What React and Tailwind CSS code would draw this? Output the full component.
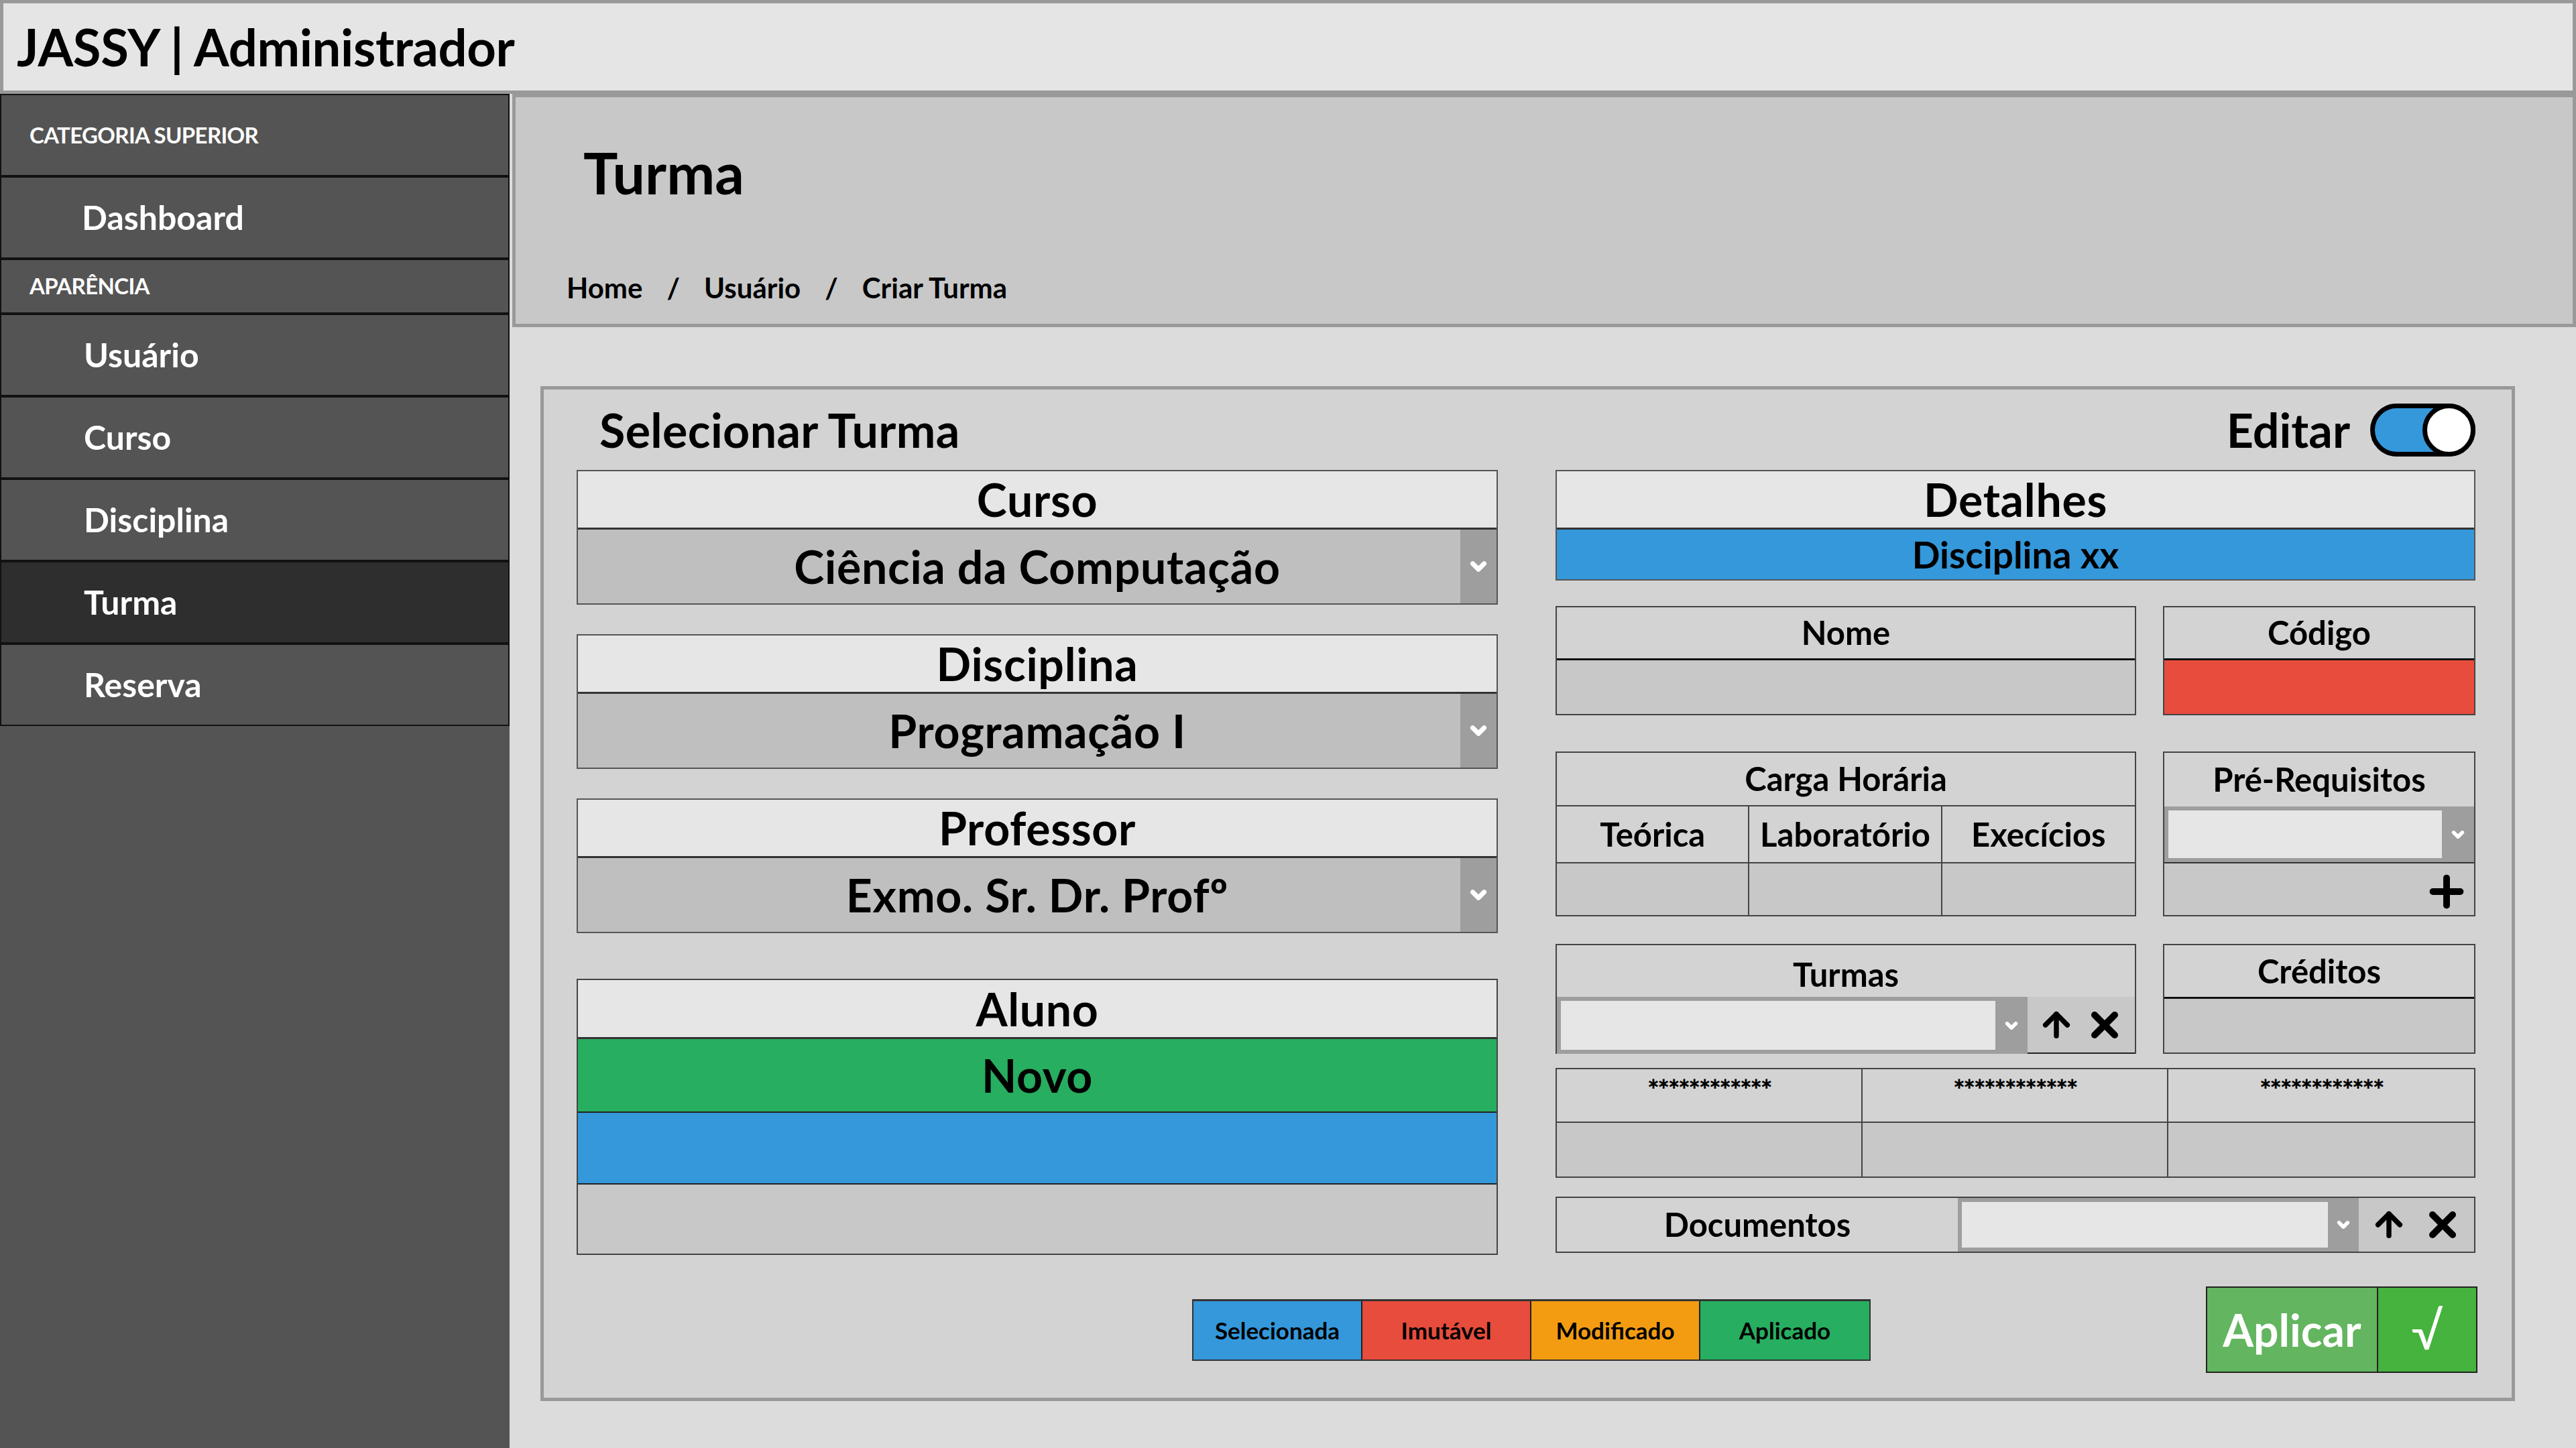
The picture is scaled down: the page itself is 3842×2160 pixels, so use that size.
import { ChevronDown, ArrowUp, X, Plus } from "lucide-react";

function Chevron({ size = 26 }) {
  return <ChevronDown color="#ffffff" strokeWidth={5} style={{ width: size, height: size }} />;
}

function SelectBlock({ label, value }) {
  return (
    <div className="flex flex-col border-2 border-[#555]">
      <div className="h-[87px] bg-[#e6e6e6] border-b-[3px] border-[#333] flex items-center justify-center text-[68px] font-bold tracking-[0.01em] text-black">
        {label}
      </div>
      <div className="h-[110px] bg-[#bfbfbf] flex">
        <div className="flex-1 pl-[54px] flex items-center justify-center text-[68px] font-bold tracking-[0.01em] text-black">{value}</div>
        <div className="w-[54px] bg-[#9e9e9e] flex items-center justify-center">
          <Chevron size={34} />
        </div>
      </div>
    </div>
  );
}

function InputSelect({ btn = 48 }) {
  return (
    <div className="flex-1 flex bg-[#9e9e9e] p-[6px] pr-0">
      <div className="flex-1 bg-[#e6e6e6]" />
      <div className="flex items-center justify-center" style={{ width: btn }}>
        <Chevron size={26} />
      </div>
    </div>
  );
}

const navItems = [
  { label: "Usuário", active: false },
  { label: "Curso", active: false },
  { label: "Disciplina", active: false },
  { label: "Turma", active: true },
  { label: "Reserva", active: false },
];

const legend = [
  { label: "Selecionada", bg: "bg-[#3498db]" },
  { label: "Imutável", bg: "bg-[#e74c3c]" },
  { label: "Modificado", bg: "bg-[#f39c12]" },
  { label: "Aplicado", bg: "bg-[#27ae60]" },
];

export default function App() {
  return (
    <div className="w-[3842px] h-[2160px] overflow-hidden bg-[#dcdcdc] flex flex-col font-['Lato',sans-serif] text-black">
      <header className="h-[140px] shrink-0 bg-[#e5e5e5] border-[5px] border-[#999] flex items-center pl-[20px]">
        <h1 className="text-[76px] font-bold tracking-[-0.005em]">JASSY | Administrador</h1>
      </header>

      <div className="flex flex-1 min-h-0">
        <aside className="w-[760px] shrink-0 bg-[#545454] flex flex-col text-white">
          <div className="h-[123px] border-2 border-[#111] flex items-center pl-[42px] text-[33px] font-bold tracking-[-0.02em]">
            CATEGORIA SUPERIOR
          </div>
          <div className="h-[123px] border-2 border-[#111] flex items-center pl-[120px] text-[50px] font-bold">
            Dashboard
          </div>
          <div className="h-[82px] border-2 border-[#111] flex items-center pl-[42px] text-[33px] font-bold tracking-[-0.02em]">
            APARÊNCIA
          </div>
          {navItems.map((item, i) => (
            <div
              key={i}
              className={`h-[123px] border-2 border-[#111] flex items-center pl-[123px] text-[50px] font-bold ${
                item.active ? "bg-[#2e2e2e]" : "bg-[#545454]"
              }`}
            >
              {item.label}
            </div>
          ))}
        </aside>

        <main className="flex-1 flex flex-col pl-[4px]">
          <section className="h-[348px] bg-[#c8c8c8] border-[5px] border-[#999] flex flex-col pl-[76px] pt-[72px]">
            <h2 className="ml-[25px] h-[80px] leading-[80px] text-[86px] font-bold">Turma</h2>
            <nav className="mt-[112px] h-[40px] leading-[40px] flex gap-[36px] text-[42px] font-bold">
              <span>Home</span>
              <span>/</span>
              <span>Usuário</span>
              <span>/</span>
              <span>Criar Turma</span>
            </nav>
          </section>

          <section className="mt-[88px] ml-[42px] w-[2945px] h-[1514px] bg-[#d3d3d3] border-[5px] border-[#999] flex flex-col pl-[49px] pr-[54px]">
            <div className="h-[120px] flex items-center justify-between">
              <h3 className="pl-[34px] text-[70px] font-bold tracking-[0.005em]">Selecionar Turma</h3>
              <div className="flex items-center gap-[30px]">
                <span className="text-[70px] font-bold">Editar</span>
                <div className="relative w-[157px] h-[79px] rounded-full border-[7px] border-black bg-[#3498db]">
                  <div className="absolute top-[-7px] right-[-7px] w-[79px] h-[79px] rounded-full border-[7px] border-black bg-white" />
                </div>
              </div>
            </div>

            <div className="flex gap-[86px]">
              {/* left column */}
              <div className="w-[1374px] flex flex-col">
                <SelectBlock label="Curso" value="Ciência da Computação" />
                <div className="mt-[44px]">
                  <SelectBlock label="Disciplina" value="Programação I" />
                </div>
                <div className="mt-[44px]">
                  <SelectBlock label="Professor" value="Exmo. Sr. Dr. Profº" />
                </div>
                <div className="mt-[68px] flex flex-col border-2 border-[#444]">
                  <div className="h-[88px] bg-[#e6e6e6] border-b-[3px] border-[#333] flex items-center justify-center text-[68px] font-bold tracking-[0.01em]">
                    Aluno
                  </div>
                  <div className="h-[110px] bg-[#27ae60] border-b-2 border-[#222] flex items-center justify-center text-[68px] font-bold tracking-[0.01em]">
                    Novo
                  </div>
                  <div className="h-[107px] bg-[#3498db] border-b-2 border-[#222]" />
                  <div className="h-[103px] bg-[#c8c8c8]" />
                </div>
              </div>

              {/* right column */}
              <div className="w-[1372px] flex flex-col">
                <div className="flex flex-col border-2 border-[#555]">
                  <div className="h-[87px] bg-[#e6e6e6] border-b-[3px] border-[#333] flex items-center justify-center text-[68px] font-bold tracking-[0.01em]">
                    Detalhes
                  </div>
                  <div className="h-[74px] bg-[#3498db] flex items-center justify-center text-[55px] font-bold">
                    Disciplina xx
                  </div>
                </div>

                <div className="mt-[38px] flex gap-[40px]">
                  <div className="w-[866px] flex flex-col border-2 border-[#444]">
                    <div className="h-[79px] bg-[#d3d3d3] border-b-[3px] border-[#111] flex items-center justify-center text-[49px] font-bold">Nome</div>
                    <div className="h-[80px] bg-[#c8c8c8]" />
                  </div>
                  <div className="flex-1 flex flex-col border-2 border-[#444]">
                    <div className="h-[79px] bg-[#d3d3d3] border-b-[3px] border-[#111] flex items-center justify-center text-[49px] font-bold">Código</div>
                    <div className="h-[80px] bg-[#e74c3c]" />
                  </div>
                </div>

                <div className="mt-[54px] flex gap-[40px]">
                  <div className="w-[866px] flex flex-col border-2 border-[#444]">
                    <div className="h-[80px] bg-[#d3d3d3] border-b-2 border-[#444] flex items-center justify-center text-[49px] font-bold">Carga Horária</div>
                    <div className="h-[85px] grid grid-cols-3 border-b-2 border-[#444] bg-[#d3d3d3]">
                      <div className="flex items-center justify-center text-[49px] font-bold border-r-2 border-[#444]">Teórica</div>
                      <div className="flex items-center justify-center text-[49px] font-bold border-r-2 border-[#444]">Laboratório</div>
                      <div className="flex items-center justify-center text-[49px] font-bold">Execícios</div>
                    </div>
                    <div className="h-[77px] grid grid-cols-3 bg-[#c8c8c8]">
                      <div className="border-r-2 border-[#444]" />
                      <div className="border-r-2 border-[#444]" />
                      <div />
                    </div>
                  </div>
                  <div className="flex-1 flex flex-col border-2 border-[#444]">
                    <div className="h-[80px] bg-[#d3d3d3] flex items-center justify-center text-[49px] font-bold">Pré-Requisitos</div>
                    <div className="h-[85px] flex border-b-2 border-[#333]">
                      <InputSelect btn={48} />
                    </div>
                    <div className="h-[77px] bg-[#c8c8c8] flex items-center justify-end pr-[6px] pt-[6px]">
                      <Plus strokeWidth={3.4} color="#000" style={{ width: 70, height: 70 }} />
                    </div>
                  </div>
                </div>

                <div className="mt-[41px] flex gap-[40px]">
                  <div className="w-[866px] flex flex-col border-2 border-[#444] border-b-0">
                    <div className="h-[77px] bg-[#d3d3d3] flex items-center justify-center text-[49px] font-bold pt-[10px]">Turmas</div>
                    <div className="h-[85px] flex">
                      <InputSelect btn={48} />
                      <div className="w-[160px] bg-[#c8c8c8] border-b-2 border-[#222] flex items-center justify-center gap-[14px]">
                        <ArrowUp strokeWidth={3.2} color="#000" style={{ width: 56, height: 56 }} />
                        <X strokeWidth={4} color="#000" style={{ width: 60, height: 60 }} />
                      </div>
                    </div>
                  </div>
                  <div className="flex-1 flex flex-col border-2 border-[#444]">
                    <div className="h-[80px] bg-[#d3d3d3] border-b-[3px] border-[#111] flex items-center justify-center text-[49px] font-bold">Créditos</div>
                    <div className="h-[80px] bg-[#c8c8c8]" />
                  </div>
                </div>

                <div className="mt-[21px] grid grid-cols-3 border-2 border-[#444]">
                  {[0, 1, 2].map((i) => (
                    <div key={i} className={`flex flex-col ${i < 2 ? "border-r-2 border-[#444]" : ""}`}>
                      <div className="h-[80px] bg-[#d3d3d3] border-b-2 border-[#444] flex justify-center pt-[6px] text-[42px] leading-[48px] font-black tracking-[-0.06em]">
                        ************
                      </div>
                      <div className="h-[80px] bg-[#c8c8c8]" />
                    </div>
                  ))}
                </div>

                <div className="mt-[28px] h-[84px] flex border-2 border-[#444] border-r-0 border-l-0">
                  <div className="w-[600px] bg-[#d3d3d3] border-l-2 border-[#444] flex items-center justify-center text-[49px] font-bold">Documentos</div>
                  <InputSelect btn={46} />
                  <div className="w-[174px] bg-[#c8c8c8] border-r-2 border-[#444] flex items-center justify-center gap-[22px]">
                    <ArrowUp strokeWidth={3.2} color="#000" style={{ width: 56, height: 56 }} />
                    <X strokeWidth={4} color="#000" style={{ width: 60, height: 60 }} />
                  </div>
                </div>
              </div>
            </div>

            <div className="mt-[47px] h-[129px] flex items-center">
              <div className="ml-[918px] flex h-[92px] border-2 border-[#333] border-t-[3px]">
                {legend.map((l, i) => (
                  <div
                    key={i}
                    className={`w-[252px] ${l.bg} flex items-center justify-center text-[35px] font-bold ${i < 3 ? "border-r-2 border-[#222]" : ""}`}
                  >
                    {l.label}
                  </div>
                ))}
              </div>
              <div className="ml-auto mr-[-3px] flex h-[129px] border-2 border-[#222] text-white">
                <div className="w-[255px] bg-[#63b55f] border-r-2 border-[#222] flex items-center justify-center text-[66px] font-bold">
                  Aplicar
                </div>
                <div className="w-[146px] bg-[#45b33d] flex items-center justify-center text-[76px] font-normal">√</div>
              </div>
            </div>
          </section>
        </main>
      </div>
    </div>
  );
}
